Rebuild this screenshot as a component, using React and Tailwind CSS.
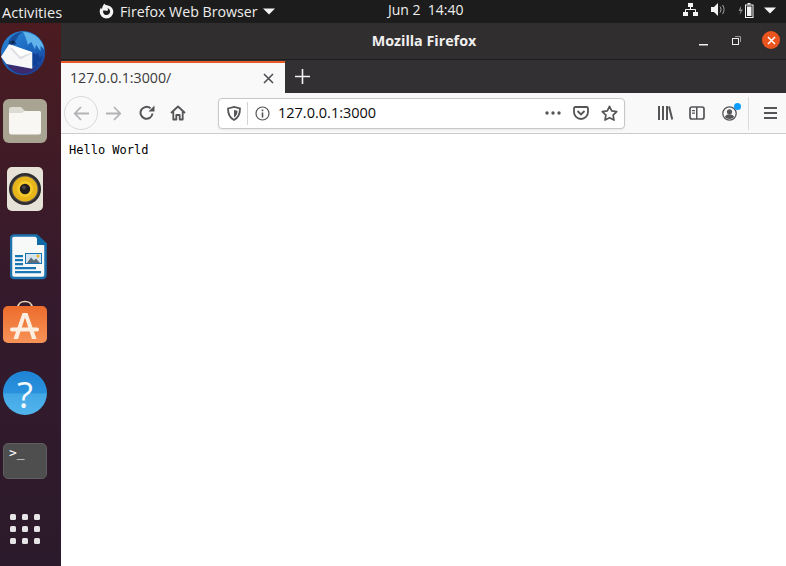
import React from "react";

const ui = { fontFamily: '"Open Sans","Noto Sans",sans-serif' };

function FirefoxGlyph() {
  return (
    <svg width="17" height="17" viewBox="0 0 17 17">
      <path fill="#f4f4f4" fillRule="evenodd" d="M6.500 0.500c.3 1 1.200 1.500 2.400 1.700 3.400.3 6.400 2.900 6.400 6.500A6.800 6.800 0 0 1 8.500 15.500 6.800 6.800 0 0 1 1.700 8.700c0-1.700.5-3 1.300-4.300.2.800.5 1.300 1 1.700C4.300 3.700 5 2 6.500 .5zM5.200 7.500c-.6 2.200.9 4.600 3.300 4.600 2.100 0 3.600-1.600 3.600-3.500 0-1.700-1.200-3.100-2.900-3.500.7.600 1 1.300.8 2.200-.8.700-2.100.6-3 .1z" />
    </svg>
  );
}

function Caret({ className = "" }) {
  return (
    <svg width="12" height="7" viewBox="0 0 12 7" className={className}>
      <path d="M0 0.500h12L6 6.500z" fill="#f4f4f4" />
    </svg>
  );
}

function TopBar() {
  return (
    <div style={ui} className="flex h-[23px] shrink-0 items-center bg-[#1c1c1c] text-[14.2px] text-[#eeeeec]">
      <span className="ml-[2px] w-[96px] text-[14.6px] leading-[20px]">Activities</span>
      <FirefoxGlyph />
      <span className="ml-[5px] w-[143px] leading-[20px] whitespace-nowrap">Firefox Web Browser</span>
      <Caret />
      <span className="ml-[113px] w-[100px] text-[14px] leading-[18px] whitespace-pre mb-[4px]">Jun 2  14:40</span>
      <div className="ml-[195px] flex items-center">
        <svg width="15" height="13" viewBox="0 0 15 13" className="mb-[4px]">
          <path fill="#f4f4f4" d="M5 0h5v4H5zM0 9h5v4H0zM10 9h5v4h-5z" />
          <path stroke="#f4f4f4" fill="none" d="M7.500 4v3M2.500 9V6.500h10V9" />
        </svg>
        <svg width="15" height="13" viewBox="0 0 15 13" className="ml-[13px] mb-[4px]">
          <path fill="#f4f4f4" d="M0 4h3l4-4v13L3 9H0z" />
          <path stroke="#aaa" fill="none" d="M9 3.500c1.300 1.600 1.300 4.400 0 6M11.500 2c2 2.600 2 6.400 0 9" />
        </svg>
        <svg width="16" height="15" viewBox="0 0 16 15" className="ml-[12px] mb-[3px]">
          <path fill="#888" d="M3 3 0.500 8H2.500L1.500 12 5 6.500H3z" />
          <path fill="#f4f4f4" d="M9.500 0h3v1.500h-3z" />
          <rect x="7.500" y="2" width="7.500" height="12.500" fill="none" stroke="#f4f4f4" />
          <rect x="9" y="3.500" width="4.500" height="9.500" fill="#f4f4f4" />
        </svg>
        <Caret className="ml-[10px] mb-[3px]" />
      </div>
    </div>
  );
}

function Thunderbird() {
  return (
    <svg width="50" height="56" viewBox="0 0 50 56" className="-ml-[2px] mt-[2px]">
      <defs>
        <linearGradient id="tb" x1="0.200" y1="0" x2="0.800" y2="1">
          <stop offset="0" stopColor="#2a86d8" />
          <stop offset="0.55" stopColor="#1a63bb" />
          <stop offset="1" stopColor="#1b3a8e" />
        </linearGradient>
      </defs>
      <circle cx="24" cy="27" r="24" fill="url(#tb)" />
      <path fill="#1a4f9c" d="M8 15c3-7 9-11 16-11-4 2-6 5-7 8l-4 6z" />
      <path fill="#5fb2ea" d="M24 4c12 0 22 9 23 19l-4-4 0 6-5-7-1 5-4-8-4 3c-1-6-3-10-5-14z" />
      <path fill="#0f3f96" d="M34 26l5 3 1-3 2 6 3-2-2 7-4-1 1 6-6-2z" />
      <path fill="#3b2a6e" d="M6 39l28 5 4-2c-6 9-22 12-32-3z" />
      <path fill="#f7f7f7" d="M0 31l9-14 25 9v18L6 39z" />
      <path fill="#dcdce2" d="M9 21 34 27 21 34z" />
      <path fill="#ffffff" d="M9 18 34 26 21 31z" />
      <path fill="#12396f" d="M8 17c1-3 3-4 6-4l3 4-5 1z" />
      <circle cx="13" cy="15" r="1" fill="#0c1a30" />
    </svg>
  );
}

function Files() {
  return (
    <div className="flex size-[44px] items-center justify-center rounded-[6px] bg-[#a9a491]">
      <svg width="32" height="28" viewBox="0 0 32 28">
        <path fill="#dedbd2" d="M0 2.500A2.500 2.500 0 0 1 2.500 0H12l4 4h14a2 2 0 0 1 2 2v4H0z" />
        <path fill="#f8f7f4" d="M0 6h13l3-2h14a2 2 0 0 1 2 2v19a2.500 2.500 0 0 1-2.500 2.500h-27A2.500 2.500 0 0 1 0 25z" />
      </svg>
    </div>
  );
}

function Rhythmbox() {
  return (
    <div className="ml-[4px] flex h-[44px] w-[36px] items-center justify-center rounded-[5px] bg-[#e6e2d8]">
      <svg width="32" height="32" viewBox="0 0 32 32">
        <circle cx="16" cy="16" r="16" fill="#2e2c2e" />
        <circle cx="16" cy="16" r="13.500" fill="#5a5650" />
        <circle cx="16" cy="16" r="12.500" fill="#e7b51a" />
        <circle cx="16" cy="16" r="8" fill="#f3c92c" />
        <circle cx="16" cy="16" r="5.200" fill="#1e1c1c" />
        <circle cx="15" cy="14.500" r="2" fill="#4a4646" />
      </svg>
    </div>
  );
}

function Writer() {
  return (
    <svg width="37" height="46" viewBox="0 0 37 46" className="ml-[7px]">
      <path fill="#f7f8f8" stroke="#1b72ad" strokeWidth="2.500" d="M4 1.500h22L35.500 11v30a3 3 0 0 1-3 3H4a3 3 0 0 1-3-3V4.500a3 3 0 0 1 3-3z" />
      <path fill="#0f6aa6" d="M27 0l10 9.500V11H27z" />
      <path fill="#1976b5" d="M5 21h8v2.200H5zM5 25h8v2.200H5zM5 29h8v2.200H5zM5 33h21v2.200H5zM5 37h26v2.200H5z" />
      <rect x="15.500" y="19.500" width="16" height="10" fill="#d5e3ec" stroke="#1976b5" />
      <path fill="#5d6d78" d="M17 29l4-5.500 3 3 2-2 4 4.500z" />
      <circle cx="28" cy="22" r="1.500" fill="#e9b32a" />
    </svg>
  );
}

function Store() {
  return (
    <svg width="44" height="46" viewBox="0 0 44 46" className="-mt-[4px]">
      <defs>
        <linearGradient id="st" x1="0" y1="0" x2="0" y2="1">
          <stop offset="0" stopColor="#ec6c2c" />
          <stop offset="1" stopColor="#f79358" />
        </linearGradient>
      </defs>
      <path fill="none" stroke="#efd5b8" strokeWidth="1.700" d="M15 10V7.500c0-8 14-8 14 0V10" />
      <rect x="0" y="6" width="44" height="37" rx="5" fill="url(#st)" />
      <path fill="#fdeee2" d="M19.500 13h5l9 26h-4.500L22 17.500 15 39h-4.500z" />
      <rect x="7" y="27.500" width="29" height="4" rx="2" fill="#fdeee2" />
    </svg>
  );
}

function Help() {
  return (
    <div className="flex size-[44px] items-center justify-center rounded-full bg-[linear-gradient(to_bottom,#1e84d4_0%,#2a92dd_50%,#42a8e6_52%,#52b4ec_100%)]">
      <span style={ui} className="text-[37px] font-normal leading-none text-[#f4f9fd]">?</span>
    </div>
  );
}

function Terminal() {
  return (
    <div className="h-[36px] w-[44px] rounded-[5px] border border-[#5e5e5e] bg-[#4e4e4e] pl-[5px] pt-[1px]">
      <div style={{ fontFamily: '"DejaVu Sans Mono",monospace' }} className="flex items-center text-[13px] leading-[15px] text-white">
        &gt;<span>_</span>
      </div>
    </div>
  );
}

function AppGrid() {
  return (
    <div className="ml-[7px] grid w-[30px] grid-cols-3 gap-x-[6px] gap-y-[6px]">
      {[0, 1, 2, 3, 4, 5, 6, 7, 8].map((i) => (
        <div key={i} className="size-[6px] rounded-[1.500px] bg-[#e6e4e6]" />
      ))}
    </div>
  );
}

function Dock() {
  const Slot = ({ children }) => (
    <div className="flex h-[44px] w-[44px] items-center">{children}</div>
  );
  return (
    <div className="flex h-full w-[61px] shrink-0 flex-col gap-[24px] bg-gradient-to-b from-[#4b1b20] via-[#341a2c] to-[#2b1a2b] pl-[3px] pt-[8px]">
      <Slot><Thunderbird /></Slot>
      <Slot><Files /></Slot>
      <Slot><Rhythmbox /></Slot>
      <Slot><Writer /></Slot>
      <Slot><Store /></Slot>
      <Slot><Help /></Slot>
      <Slot><Terminal /></Slot>
      <Slot><AppGrid /></Slot>
    </div>
  );
}

function TitleBar() {
  return (
    <div style={ui} className="relative flex h-[37px] shrink-0 items-center justify-center border-b border-[#1f1e1f] bg-[#302e2f]">
      <span className="ml-[1px] text-[14.300px] font-bold text-[#f0eeee]">Mozilla Firefox</span>
      <div className="absolute right-[6px] top-[8px] flex items-center">
        <svg width="9" height="2" viewBox="0 0 9 2" className="mt-[10px]"><path fill="#eee" d="M0 0h9v1.500H0z" /></svg>
        <svg width="9" height="9" viewBox="0 0 9 9" className="ml-[24px]">
          <rect x="0.500" y="2.500" width="6" height="6" fill="none" stroke="#eee" />
          <path fill="none" stroke="#999" d="M3 .500h5.500V6" />
        </svg>
        <div className="ml-[21px] flex size-[18px] items-center justify-center rounded-full bg-[#e9541f]">
          <svg width="9" height="9" viewBox="0 0 9 9"><path stroke="#fff" strokeWidth="1.500" d="M1 1l7 7M8 1l-7 7" /></svg>
        </div>
      </div>
    </div>
  );
}

function TabStrip() {
  return (
    <div className="flex h-[33px] shrink-0 bg-[#323033]">
      <div style={ui} className="mt-[1px] flex w-[224px] items-center border-t-2 border-[#ea5a27] bg-[#f9f9fa] pl-[9px] pr-[11px]">
        <span className="flex-1 text-[14.200px] text-[#3a3a3c]">127.0.0.1:3000/</span>
        <svg width="11" height="11" viewBox="0 0 11 11"><path stroke="#4a4a4f" strokeWidth="1.500" d="M1 1l9 9M10 1l-9 9" /></svg>
      </div>
      <div className="flex w-[35px] items-center justify-center">
        <svg width="15" height="15" viewBox="0 0 15 15"><path stroke="#f2f2f2" strokeWidth="1.600" d="M7.500 0v15M0 7.500h15" /></svg>
      </div>
    </div>
  );
}

const ic = "#555558";

function NavBar() {
  return (
    <div className="flex h-[41px] shrink-0 items-center border-b border-[#cccccc] bg-[#f9f9fa]">
      <div className="ml-[3px] flex size-[34px] items-center justify-center rounded-full border border-[#d9d9db]">
        <svg width="17" height="15" viewBox="0 0 17 15"><path fill="none" stroke="#b3b3b6" strokeWidth="1.800" d="M16 7.500H2M8 1 1.800 7.500 8 14" /></svg>
      </div>
      <svg width="17" height="15" viewBox="0 0 17 15" className="ml-[7px]"><path fill="none" stroke="#b3b3b6" strokeWidth="1.800" d="M1 7.500h14M9 1l6.200 6.500L9 14" /></svg>
      <svg width="16" height="16" viewBox="0 0 16 16" className="ml-[17px]">
        <path fill="none" stroke={ic} strokeWidth="2" d="M13.500 8.500A6 6 0 1 1 11.500 3.300" />
        <path fill={ic} d="M9.500 6.500H15.500V.500z" />
      </svg>
      <svg width="16" height="16" viewBox="0 0 16 16" className="ml-[15px]">
        <path fill="none" stroke={ic} strokeWidth="1.800" strokeLinejoin="round" d="M1 8 8 1.500 15 8M3.300 6.500V14.500h3V10h3.400v4.500h3V6.500" />
      </svg>
      <div className="ml-[32px] flex h-[31px] w-[407px] items-center rounded-[4px] border border-[#c8c8c8] bg-white shadow-[0_1px_2px_rgba(0,0,0,0.08)]">
        <svg width="14" height="15" viewBox="0 0 14 15" className="ml-[8px]">
          <path fill="none" stroke={ic} strokeWidth="1.800" d="M1 2.500 7 1l6 1.500c0 5-1 9-6 11.500C2 11.500 1 7.500 1 2.500z" />
          <path fill={ic} d="M7 4l3.500.8C10.500 8 9.500 10 7 11.500z" />
        </svg>
        <div className="ml-[6px] h-[23px] w-px bg-[#d5d5d5]" />
        <svg width="15" height="15" viewBox="0 0 15 15" className="ml-[7px]">
          <circle cx="7.500" cy="7.500" r="6.500" fill="none" stroke={ic} strokeWidth="1.200" />
          <path fill={ic} d="M6.700 6.500h1.600v5H6.700zM6.700 3.500h1.600v1.700H6.700z" />
        </svg>
        <span style={ui} className="ml-[8px] flex-1 text-[14.500px] text-[#0c0c0d]">127.0.0.1:3000</span>
        <svg width="16" height="4" viewBox="0 0 16 4"><g fill={ic}><circle cx="2" cy="2" r="1.700" /><circle cx="8" cy="2" r="1.700" /><circle cx="14" cy="2" r="1.700" /></g></svg>
        <svg width="16" height="14" viewBox="0 0 16 14" className="ml-[12px]">
          <path fill="none" stroke={ic} strokeWidth="1.800" d="M1 2.500A1.500 1.500 0 0 1 2.500 1h11A1.500 1.500 0 0 1 15 2.500V6a7 7 0 0 1-14 0z" />
          <path fill="none" stroke={ic} strokeWidth="1.800" d="M4.500 5 8 8.500 11.500 5" />
        </svg>
        <svg width="17" height="16" viewBox="0 0 17 16" className="ml-[12px] mr-[6px]">
          <path fill="none" stroke={ic} strokeWidth="1.700" strokeLinejoin="round" d="M8.500 1.300l2.200 4.600 5 .7-3.600 3.500.9 5-4.500-2.400L4 15.100l.9-5L1.300 6.600l5-.7z" />
        </svg>
      </div>
      <svg width="15" height="14" viewBox="0 0 15 14" className="ml-[33px]">
        <path fill={ic} d="M0 0h2v14H0zM4 0h2v14H4zM8 0h2v14H8z" />
        <path stroke={ic} strokeWidth="2" d="M11 .500l3.300 13" />
      </svg>
      <svg width="16" height="14" viewBox="0 0 16 14" className="ml-[16px]">
        <rect x="1" y="1" width="14" height="12" rx="2" fill="none" stroke={ic} strokeWidth="1.700" />
        <path fill={ic} d="M7 1h1.500v12H7zM3 4h3v1.300H3zM3 6.500h3v1.300H3z" />
      </svg>
      <div className="relative ml-[17px] size-[15px]">
        <svg width="15" height="15" viewBox="0 0 15 15">
          <circle cx="7.500" cy="7.500" r="6.700" fill="none" stroke={ic} strokeWidth="1.300" />
          <circle cx="7.500" cy="5.800" r="2.600" fill={ic} />
          <path fill={ic} d="M2.800 11c1-2 3-2.700 4.700-2.700s3.700.7 4.700 2.700c-2.500 2.600-6.900 2.600-9.400 0z" />
        </svg>
        <div className="absolute -right-[4px] -top-[3px] size-[7px] rounded-full bg-[#0a9dff]" />
      </div>
      <div className="ml-[11px] h-[33px] w-px bg-[#dcdcdc]" />
      <svg width="13" height="12" viewBox="0 0 13 12" className="ml-[15px]">
        <path fill={ic} d="M0 0h13v2H0zM0 5h13v2H0zM0 10h13v2H0z" />
      </svg>
    </div>
  );
}

export default function App() {
  return (
    <div className="flex h-[566px] w-[786px] flex-col overflow-hidden bg-white">
      <TopBar />
      <div className="flex min-h-0 flex-1">
        <Dock />
        <div className="flex min-w-0 flex-1 flex-col">
          <TitleBar />
          <TabStrip />
          <NavBar />
          <div style={{ fontFamily: '"DejaVu Sans Mono",monospace' }} className="flex-1 bg-white px-[8px] pt-[9px] text-[12px] leading-[15px] text-black">
            Hello World
          </div>
        </div>
      </div>
    </div>
  );
}
